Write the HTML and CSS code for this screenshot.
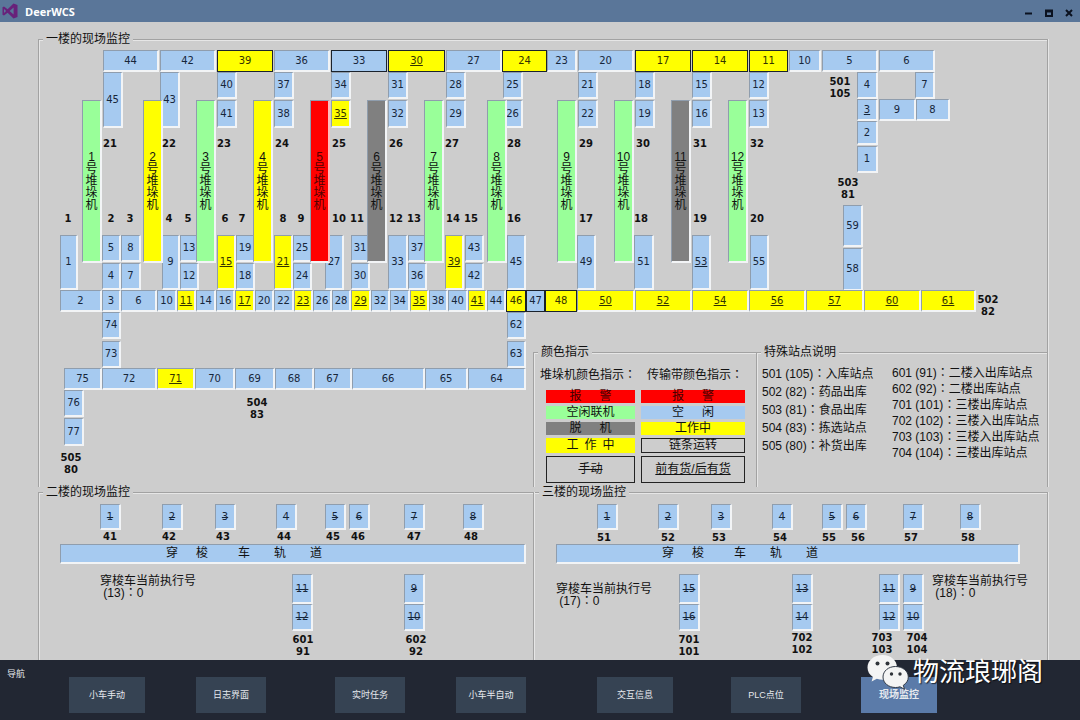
FILE: index.html
```html
<!DOCTYPE html>
<html lang="zh-CN">
<head>
<meta charset="utf-8">
<title>DeerWCS</title>
<link rel="stylesheet" href="styles.css">
</head>
<body>
<header class="titlebar">
  <svg class="logo" viewBox="0 0 16 16" aria-hidden="true"><path fill="#68217a" fill-rule="evenodd" d="M11.5 0.5 15.5 2V14L11.5 15.5 5.6 9.8 2 12.6.5 11.8V4.2L2 3.4 5.6 6.2ZM11.6 4.6 7.6 8 11.6 11.4ZM2 5.9V10.1L4.1 8Z"/></svg>
  <h1 class="app-name">DeerWCS</h1>
  <div class="window-controls">
    <button type="button" aria-label="最小化"><svg viewBox="0 0 8 8"><path d="M0 4.5H7"/></svg></button>
    <button type="button" aria-label="最大化"><svg viewBox="0 0 8 8"><path d="M1 1.5H7V7H1ZM1 2.5H7"/></svg></button>
    <button type="button" aria-label="关闭"><svg viewBox="0 0 8 8"><path d="M1 1 7 7M7 1 1 7"/></svg></button>
  </div>
</header>

<main class="monitor">
  <section class="panel floor-one">
    <h2 class="panel-title">一楼的现场监控</h2>
    <div class="plan" id="floor1"></div>
    <div class="info">
      <section class="panel colours">
        <h2 class="panel-title">颜色指示</h2>
        <div class="legend-grid">
          <div class="legend-col">
            <h3>堆垛机颜色指示<span class="colon" lang="zh-Hant">：</span></h3>
            <ul class="swatches">
              <li class="red">报&ensp;&ensp;&ensp;警</li>
              <li class="green">空闲联机</li>
              <li class="grey">脱&ensp;&ensp;&ensp;机</li>
              <li class="yellow">工&ensp;作&ensp;中</li>
              <li class="boxed struck">手动</li>
            </ul>
          </div>
          <div class="legend-col belt">
            <h3>传输带颜色指示<span class="colon" lang="zh-Hant">：</span></h3>
            <ul class="swatches">
              <li class="red">报&ensp;&ensp;&ensp;警</li>
              <li class="blue">空&ensp;&ensp;&ensp;闲</li>
              <li class="yellow">工作中</li>
              <li class="boxed">链条运转</li>
              <li class="boxed under">前有货/后有货</li>
            </ul>
          </div>
        </div>
      </section>
      <section class="panel sites">
        <h2 class="panel-title">特殊站点说明</h2>
        <div class="site-grid">
          <ul class="site-list">
            <li>501 (105)<span class="colon" lang="zh-Hant">：</span>入库站点</li>
            <li>502 (82)<span class="colon" lang="zh-Hant">：</span>药品出库</li>
            <li>503 (81)<span class="colon" lang="zh-Hant">：</span>食品出库</li>
            <li>504 (83)<span class="colon" lang="zh-Hant">：</span>拣选站点</li>
            <li>505 (80)<span class="colon" lang="zh-Hant">：</span>补货出库</li>
          </ul>
          <ul class="site-list dense">
            <li>601 (91)<span class="colon" lang="zh-Hant">：</span>二楼入出库站点</li>
            <li>602 (92)<span class="colon" lang="zh-Hant">：</span>二楼出库站点</li>
            <li>701 (101)<span class="colon" lang="zh-Hant">：</span>三楼出库站点</li>
            <li>702 (102)<span class="colon" lang="zh-Hant">：</span>三楼入出库站点</li>
            <li>703 (103)<span class="colon" lang="zh-Hant">：</span>三楼入出库站点</li>
            <li>704 (104)<span class="colon" lang="zh-Hant">：</span>三楼出库站点</li>
          </ul>
        </div>
      </section>
    </div>
  </section>
  <div class="upper-floors">
    <section class="panel">
      <h2 class="panel-title">二楼的现场监控</h2>
      <div class="plan" id="floor2"></div>
    </section>
    <section class="panel floor-three">
      <h2 class="panel-title">三楼的现场监控</h2>
      <div class="plan" id="floor3"></div>
    </section>
  </div>
</main>

<footer class="dock">
  <span class="dock-label">导航</span>
  <nav class="dock-nav" aria-label="导航">
    <button type="button" class="wide">小车手动</button>
    <button type="button">日志界面</button>
    <button type="button">实时任务</button>
    <button type="button">小车半自动</button>
    <button type="button" class="wide">交互信息</button>
    <button type="button">PLC点位</button>
    <button type="button" class="wide active">现场监控</button>
  </nav>
  <div class="watermark">
    <svg viewBox="0 0 42 36" aria-hidden="true">
      <path fill="#f4f4f4" d="M15.500 1C7 1 .5 6.500 .5 13.500c0 4 2 7.200 5.400 9.500L4.600 27.500l5.200-2.700c1.900.6 3.800.9 5.900.9C24 25.700 30 20.500 30 13.500 30 6.500 24 1 15.500 1Z"/>
      <path fill="#f4f4f4" stroke="#333b48" stroke-width="1" d="M28.500 12.500C21.500 12.500 16 17 16 23s5.500 10.500 12.500 10.500c1.600 0 3.100-.2 4.500-.7l4.500 2.500-1.200-4C39.400 29.400 41.300 26.500 41.300 23c0-6-5.800-10.500-12.800-10.500Z"/>
      <g fill="#30343a"><circle cx="10.500" cy="9.500" r="2"/><circle cx="20.500" cy="9.500" r="2"/><circle cx="24.500" cy="20" r="1.700"/><circle cx="33" cy="20" r="1.700"/></g>
    </svg>
    <span>物流琅琊阁</span>
  </div>
</footer>
<script src="plan.js"></script>
</body>
</html>
```

FILE: styles.css
```css
* { box-sizing: border-box; }

body {
  margin: 0;
  min-height: 100vh;
  display: flex;
  flex-direction: column;
  background: #cdcdcd;
  color: #111;
  font: 12px/14px "Liberation Sans", "Noto Sans CJK SC", sans-serif;
}

h1, h2, h3, ul { margin: 0; padding: 0; font-size: 12px; font-weight: 400; list-style: none; }
button { font: inherit; border: 0; padding: 0; cursor: pointer; }
.colon { font-family: "Liberation Sans", "Noto Sans CJK TC", sans-serif; }

/* title bar */
.titlebar {
  display: flex;
  align-items: center;
  gap: 7px;
  height: 22px;
  padding: 0 7px 0 2px;
  background: #5a7699;
  color: #fff;
}
.logo { width: 16px; height: 16px; }
.app-name { font: 700 11px/16px "Open Sans", "Noto Sans", sans-serif; padding-top: 2px; }
.window-controls { display: flex; gap: 12px; margin-left: auto; padding-top: 4px; }
.window-controls button { display: flex; background: none; }
.window-controls svg { width: 8px; height: 8px; fill: none; stroke: #0b1220; stroke-width: 2; }

/* panels */
.monitor { flex: 1; display: flex; flex-direction: column; gap: 5px; padding: 17px 32px 0 38px; }
.panel {
  display: grid;
  border: 1px solid #a2a2a2;
  border-bottom: 0;
  box-shadow: inset 1px 1px #e6e6e6, 1px 0 #e6e6e6;
}
.panel-title {
  grid-area: 1 / 1;
  justify-self: start;
  align-self: start;
  z-index: 1;
  margin: -8px 0 0 4px;
  padding: 0 3px;
  line-height: 15px;
  background: #cdcdcd;
}
.plan { grid-area: 1 / 1; position: relative; min-height: 167px; }
.floor-one { grid-template-columns: 494fr 514fr; }
.floor-one > .plan { grid-column: 1 / -1; min-height: 447px; }
.upper-floors { flex: 1; display: grid; grid-template-columns: 496fr 513fr; gap: 1px; }
.floor-three { border-left: 0; box-shadow: inset 0 1px #e6e6e6, 1px 0 #e6e6e6; }

/* key and station notes */
.info { grid-area: 1 / 2; align-self: end; display: grid; grid-template-columns: 221fr 293fr; }
.info .panel { border-right: 0; box-shadow: inset 1px 1px #e6e6e6; }
.legend-grid {
  grid-area: 1 / 1;
  display: grid;
  grid-template-columns: 89px 104px;
  gap: 6px;
  padding: 14px 11px 4px 12px;
}
.legend-col h3 { line-height: 16px; margin: 0 -12px 7px -6px; white-space: nowrap; }
.legend-col.belt h3 { margin-left: 6px; }
.swatches { display: grid; grid-template-rows: 13px 13px 13px 15px 27px; gap: 3px; }
.swatches li { display: flex; align-items: center; justify-content: center; line-height: 13px; white-space: pre; }
.red { background: #f00; color: #400; }
.green { background: #9f9; }
.grey { background: #808080; }
.yellow { background: #ff0; }
.blue { background: #a6caf0; }
.swatches .boxed { border: 1px solid #222; }
.struck { text-decoration: line-through; }
.under { text-decoration: underline; }
.site-grid { grid-area: 1 / 1; display: grid; grid-template-columns: 130px 1fr; padding: 12px 0 0 5px; white-space: nowrap; }
.site-list { line-height: 18px; }
.site-list.dense { line-height: 16px; }

/* conveyor plan */
.cell, .crane {
  position: absolute;
  display: flex;
  align-items: center;
  justify-content: center;
  border: 1px solid #f2f4f6;
  border-width: 1px 2px 2px 1px;
  border-top-color: #8f9dad;
  border-left-color: #8f9dad;
}
.cell { background: #a6caf0; color: #16263a; font: 10px/12px "DejaVu Sans", sans-serif; }
.cell.busy { background: #ff0; color: #333300; }
.cell.goods { text-decoration: underline; }
.cell.manual { text-decoration: line-through; }
.cell.chain { border: 1px solid #1a222c; }
.crane { flex-direction: column; line-height: 12px; color: #111; text-align: center; }
.crane.idle { background: #9f9; }
.crane.work { background: #ff0; }
.crane.alarm { background: #f00; color: #500; border-right-color: #fbb; }
.crane.off { background: #808080; }
.tag { position: absolute; width: 30px; text-align: center; white-space: pre; font: 700 10px/12px "DejaVu Sans", sans-serif; }
.track {
  position: absolute;
  padding-left: 105px;
  background: #a6caf0;
  border: 1px solid #f2f4f6;
  border-width: 1px 2px 2px 1px;
  border-top-color: #8f9dad;
  border-left-color: #8f9dad;
  line-height: 17px;
  white-space: pre;
}
.note { position: absolute; line-height: 12px; white-space: pre; font-family: "Liberation Sans", "Noto Sans CJK TC", sans-serif; }

/* bottom navigation */
.dock { position: relative; display: flex; height: 60px; background: #222733; color: #e6e9ee; font-size: 9px; }
.dock-label { width: 69px; padding: 7px 0 0 7px; }
.dock-nav {
  flex: 1;
  display: grid;
  grid-template-columns: 127fr 139fr 121fr 141fr 134fr 130fr 219fr;
  align-items: start;
  padding-top: 17px;
}
.dock-nav button { width: 70px; height: 36px; background: #364353; color: #e6e9ee; }
.dock-nav .wide { width: 76px; }
.dock-nav .active { background: #5b7ba9; font-size: 10px; font-weight: 700; }
.watermark {
  position: absolute;
  right: 37px;
  bottom: 30px;
  display: flex;
  align-items: center;
  gap: 4px;
  color: #fff;
  font-size: 26px;
  line-height: 36px;
  text-shadow: 1px 1px 1px #000a;
  white-space: nowrap;
  pointer-events: none;
}
.watermark svg { width: 42px; height: 36px; }
```

FILE: plan.js
```js
// Cells are [x, y, width, height, label, flags].
// Flags: y = working, u = goods present, b = chain running, s = manual.
const FLAGS = { y: 'busy', u: 'goods', b: 'chain', s: 'manual' };

function add(plan, className, x, y, w, h, text) {
  const el = document.createElement('div');
  el.className = className;
  el.textContent = text;
  el.style.left = x - plan.x + 'px';
  el.style.top = y - plan.y + 'px';
  if (w) el.style.width = w + 'px';
  if (h) el.style.height = h + 'px';
  plan.el.appendChild(el);
  return el;
}
function openPlan(id, x, y) { return { el: document.getElementById(id), x, y }; }
function cells(plan, list) {
  list.forEach(([x, y, w, h, text, flags = '']) =>
    add(plan, ['cell', ...[...flags].map(f => FLAGS[f])].join(' '), x, y, w, h, text));
}
function row(plan, y, h, list) { cells(plan, list.map(([x, w, t, f]) => [x, y, w, h, t, f])); }
function tags(plan, y, list) { list.forEach(([cx, t]) => add(plan, 'tag', cx - 15, y - 6, 0, 0, t)); }
function note(plan, x, y, shuttle, task) {
  add(plan, 'note', x, y, 0, 0, '穿梭车当前执行号\n (' + shuttle + ')：' + task).lang = 'zh-Hant';
}

const one = openPlan('floor1', 39, 40);
row(one, 50, 22, [
  [103, 56, '44'], [160, 56, '42'], [217, 56, '39', 'yb'], [274, 56, '36'], [331, 56, '33', 'b'],
  [388, 57, '30', 'yub'], [446, 56, '27'], [502, 45, '24', 'yb'], [547, 30, '23'], [578, 56, '20'],
  [635, 56, '17', 'yb'], [692, 56, '14', 'yb'], [749, 39, '11', 'yb'], [789, 32, '10'],
  [822, 56, '5'], [879, 56, '6']
]);
cells(one, [[103, 72, 20, 56, '45'], [160, 72, 20, 56, '43']]);
row(one, 72, 27, [
  [217, 20, '40'], [274, 20, '37'], [331, 20, '34'], [388, 20, '31'], [446, 20, '28'], [503, 20, '25'],
  [578, 20, '21'], [635, 20, '18'], [692, 20, '15'], [749, 20, '12'], [857, 21, '4'], [915, 20, '7']
]);
row(one, 100, 28, [
  [217, 20, '41'], [274, 20, '38'], [331, 20, '35', 'yu'], [388, 20, '32'], [446, 20, '29'], [503, 20, '26'],
  [578, 20, '22'], [635, 20, '19'], [692, 20, '16'], [749, 20, '13']
]);
cells(one, [
  [857, 99, 21, 22, '3', 'u'], [857, 121, 21, 24, '2'], [857, 146, 21, 27, '1'],
  [879, 99, 37, 22, '9'], [916, 99, 34, 22, '8'], [843, 205, 20, 42, '59'], [843, 248, 20, 43, '58']
]);
row(one, 235, 55, [
  [60, 18, '1'], [162, 18, '9'], [217, 19, '15', 'yu'], [274, 19, '21', 'yu'], [325, 19, '27'],
  [388, 20, '33'], [445, 19, '39', 'yu'], [507, 19, '45'], [577, 19, '49'], [634, 20, '51'],
  [692, 19, '53', 'u'], [750, 19, '55']
]);
row(one, 235, 27, [
  [102, 19, '5'], [121, 20, '8'], [180, 19, '13'], [236, 19, '19'], [293, 19, '25'],
  [351, 19, '31'], [408, 19, '37'], [465, 19, '43']
]);
row(one, 263, 27, [
  [102, 19, '4'], [121, 20, '7'], [180, 19, '12'], [236, 19, '18'], [293, 19, '24'],
  [351, 19, '30'], [408, 19, '36'], [465, 19, '42']
]);
row(one, 290, 22, [
  [60, 42, '2'], [102, 19, '3'], [121, 36, '6'], [157, 20, '10'], [177, 19, '11', 'yu'], [196, 20, '14'],
  [216, 19, '16'], [235, 20, '17', 'yu'], [255, 19, '20'], [274, 20, '22'], [294, 19, '23', 'yu'],
  [313, 19, '26'], [332, 19, '28'], [351, 20, '29', 'yu'], [371, 19, '32'], [390, 20, '34'],
  [410, 19, '35', 'yu'], [429, 19, '38'], [448, 20, '40'], [468, 19, '41', 'yu'], [487, 19, '44'],
  [506, 20, '46', 'yb'], [526, 19, '47', 'b'], [545, 32, '48', 'yb'], [577, 58, '50', 'yu'],
  [635, 57, '52', 'yu'], [692, 57, '54', 'yu'], [749, 57, '56', 'yu'], [806, 58, '57', 'yu'],
  [864, 57, '60', 'yu'], [921, 55, '61', 'yu']
]);
cells(one, [
  [102, 312, 19, 27, '74'], [102, 341, 19, 27, '73'], [507, 312, 19, 27, '62'], [507, 341, 19, 27, '63'],
  [64, 390, 20, 27, '76'], [64, 418, 20, 28, '77']
]);
row(one, 368, 22, [
  [64, 38, '75'], [102, 55, '72'], [157, 38, '71', 'yu'], [195, 40, '70'], [235, 40, '69'],
  [275, 39, '68'], [314, 38, '67'], [352, 73, '66'], [425, 43, '65'], [468, 58, '64']
]);
[[82, 'idle'], [143, 'work'], [196, 'idle'], [253, 'work'], [310, 'alarm'], [367, 'off'], [424, 'idle'],
 [487, 'idle'], [557, 'idle'], [614, 'idle'], [671, 'off'], [728, 'idle']].forEach(([x, state], i) => {
  const crane = add(one, 'crane ' + state, x, 100, 20, 163, '');
  [i + 1, ...'号堆垛机'].forEach(t => {
    const s = document.createElement('span');
    s.textContent = t;
    crane.appendChild(s);
  });
});
tags(one, 144, [[110, '21'], [169, '22'], [224, '23'], [282, '24'], [339, '25'], [396, '26'], [452, '27'],
  [514, '28'], [586, '29'], [643, '30'], [700, '31'], [757, '32']]);
tags(one, 219, [[68, '1'], [111, '2'], [130, '3'], [169, '4'], [188, '5'], [225, '6'], [242, '7'], [283, '8'],
  [301, '9'], [339, '10'], [357, '11'], [396, '12'], [414, '13'], [453, '14'], [471, '15'], [514, '16'],
  [586, '17'], [641, '18'], [700, '19'], [757, '20']]);
tags(one, 82, [[840, '501\n105']]);
tags(one, 183, [[848, '503\n81']]);
tags(one, 300, [[988, '502\n82']]);
tags(one, 403, [[257, '504\n83']]);
tags(one, 458, [[71, '505\n80']]);

const TRACK = '穿\u2002\u2002\u2002梭\u2002\u2002\u2002\u2002\u2002车\u2002\u2002\u2002\u2002轨\u2002\u2002\u2002\u2002道';

const two = openPlan('floor2', 39, 493);
row(two, 504, 26, [[100, 21, '1', 's'], [162, 21, '2', 's'], [215, 21, '3', 's'], [276, 21, '4', 's'],
  [325, 21, '5', 's'], [349, 21, '6', 's'], [404, 21, '7', 's'], [463, 21, '8', 's']]);
tags(two, 537, [[110, '41'], [169, '42'], [223, '43'], [284, '44'], [333, '45'], [358, '46'], [414, '47'], [471, '48']]);
add(two, 'track', 60, 544, 466, 20, TRACK);
row(two, 574, 30, [[292, 21, '11', 's'], [404, 21, '9', 's']]);
row(two, 604, 27, [[292, 21, '12', 's'], [404, 21, '10', 's']]);
tags(two, 640, [[303, '601\n91'], [416, '602\n92']]);
note(two, 100, 575, 13, 0);

const three = openPlan('floor3', 535, 493);
row(three, 504, 26, [[597, 21, '1', 's'], [658, 21, '2', 's'], [711, 21, '3', 's'], [772, 21, '4', 's'],
  [822, 21, '5', 's'], [846, 21, '6', 's'], [903, 21, '7', 's'], [960, 21, '8', 's']]);
tags(three, 538, [[604, '51'], [668, '52'], [719, '53'], [780, '54'], [829, '55'], [858, '56'], [911, '57'], [968, '58']]);
add(three, 'track', 556, 544, 464, 20, TRACK);
row(three, 574, 30, [[679, 21, '15', 's'], [792, 21, '13', 's'], [879, 21, '11', 's'], [903, 21, '9', 's']]);
row(three, 604, 27, [[679, 21, '16', 's'], [792, 21, '14', 's'], [879, 21, '12', 's'], [903, 21, '10', 's']]);
tags(three, 640, [[689, '701\n101']]);
tags(three, 638, [[802, '702\n102'], [882, '703\n103'], [917, '704\n104']]);
note(three, 556, 583, 17, 0);
note(three, 932, 575, 18, 0);
```
